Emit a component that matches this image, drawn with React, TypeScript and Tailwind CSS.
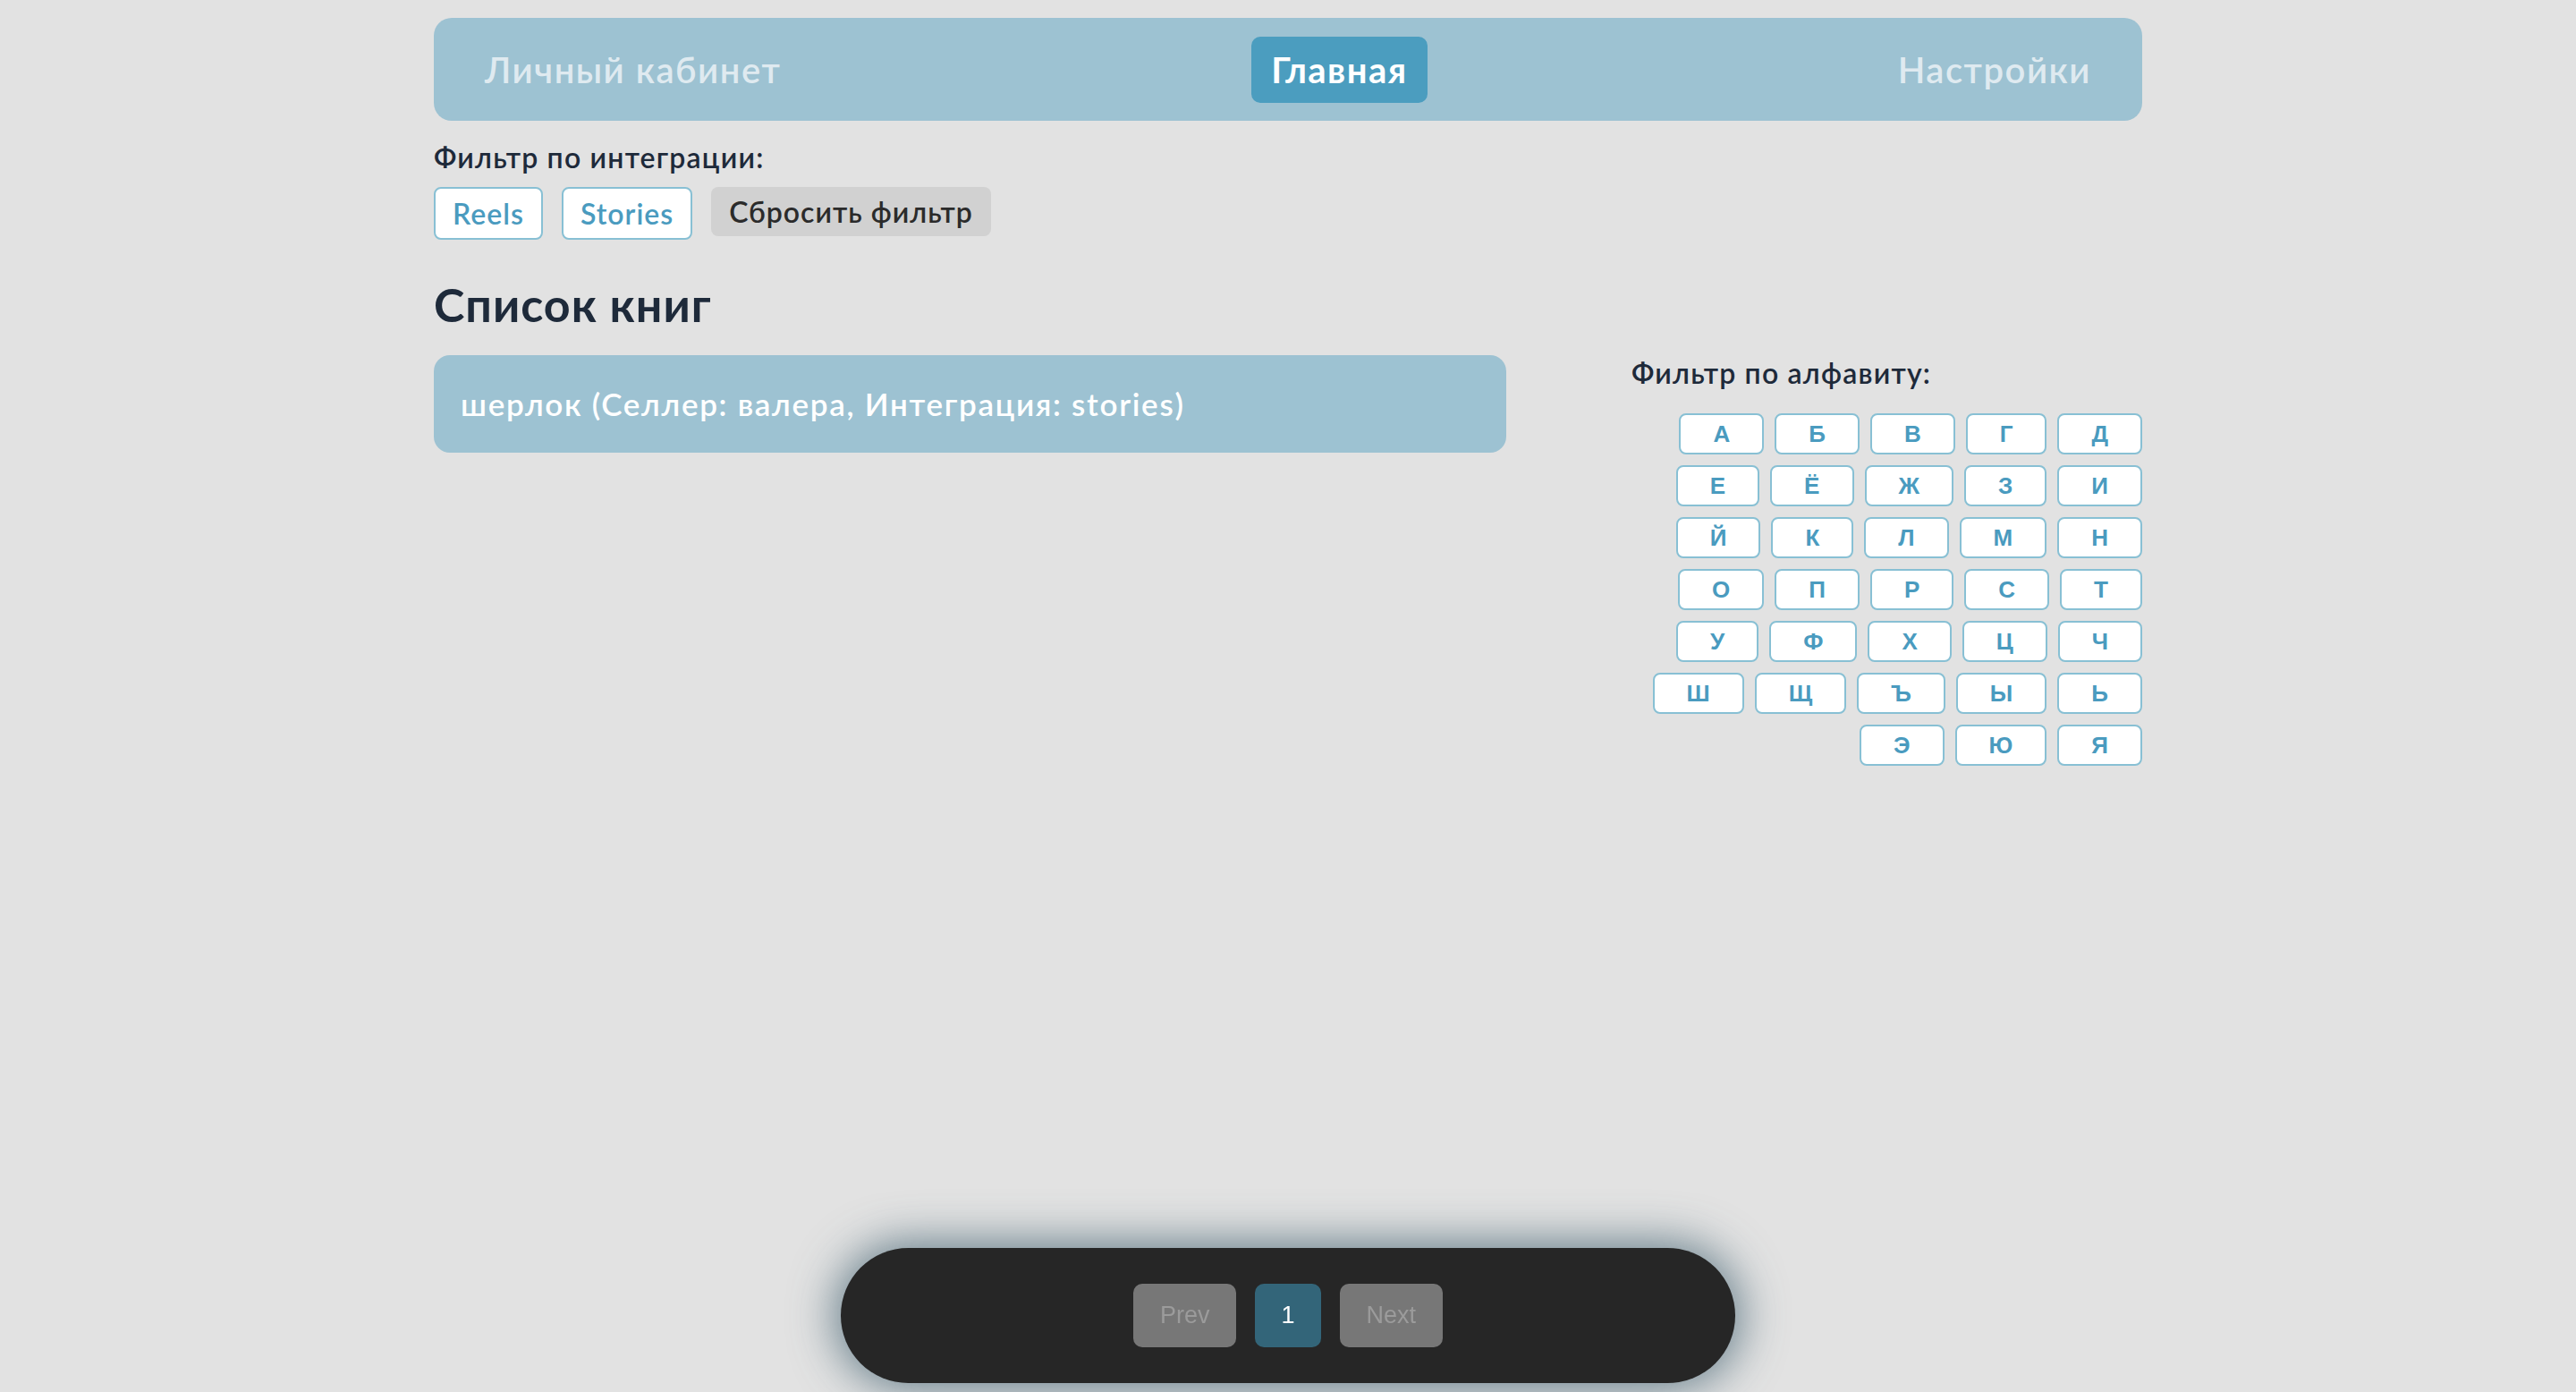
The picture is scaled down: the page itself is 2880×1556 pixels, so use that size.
import { useState } from 'react';

const letters = 'АБВГДЕЁЖЗИЙКЛМНОПРСТУФХЦЧШЩЪЫЬЭЮЯ'.split('');

const books = [{ title: 'шерлок', seller: 'валера', integration: 'stories' }];

const App = () => {
  const [page] = useState(1);

  return (
    <div className="min-h-screen bg-[#e2e2e2] font-['Lato','Noto_Sans',sans-serif]">
      <div className="w-[1910px] mx-auto pt-[20px] pb-[200px]">
        {/* top navigation */}
        <nav className="h-[115px] rounded-[20px] bg-[#9dc2d2] flex items-center justify-between px-[57px]">
          <a className="text-[40px] font-semibold tracking-[1.5px] text-[#dfeaf0]">Личный кабинет</a>
          <a className="h-[74px] px-[22px] rounded-[10px] bg-[#4b9dbf] flex items-center text-[40px] font-bold tracking-[1.5px] text-white">
            Главная
          </a>
          <a className="text-[40px] font-semibold tracking-[1.5px] text-[#dfeaf0]">Настройки</a>
        </nav>

        {/* integration filter */}
        <div className="mt-[21px]">
          <div className="text-[32px] font-semibold tracking-[1.2px] text-[#1e2a3a] leading-[40px]">Фильтр по интеграции:</div>
          <div className="mt-[13px] flex items-start gap-[21px]">
            <button className="h-[59px] px-[19px] rounded-[8px] border-2 border-[#88c0d4] bg-white text-[32px] font-semibold tracking-[1px] text-[#4a9bbf]">
              Reels
            </button>
            <button className="h-[59px] px-[19px] rounded-[8px] border-2 border-[#88c0d4] bg-white text-[32px] font-semibold tracking-[1px] text-[#4a9bbf]">
              Stories
            </button>
            <button className="h-[55px] px-[20px] rounded-[8px] bg-[#d1d1d1] text-[32px] font-semibold tracking-[1px] text-[#2b2b2b]">
              Сбросить фильтр
            </button>
          </div>
        </div>

        <h2 className="mt-[42px] text-[52px] font-bold tracking-[1px] text-[#1e2a3a] leading-[60px]">Список книг</h2>

        <div className="mt-[27px] flex items-start justify-between">
          {/* book list */}
          <div className="w-[1199px] flex flex-col gap-[20px]">
            {books.map((b) => (
              <div
                key={b.title}
                className="h-[109px] rounded-[18px] bg-[#9dc2d2] flex items-center px-[30px] text-[35px] font-semibold tracking-[1.7px] text-white"
              >
                {b.title} (Селлер: {b.seller}, Интеграция: {b.integration})
              </div>
            ))}
          </div>

          {/* alphabet filter */}
          <div className="w-[571px]">
            <div className="text-[32px] font-semibold tracking-[1.2px] text-[#1e2a3a] leading-[40px]">Фильтр по алфавиту:</div>
            <div className="mt-[25px] flex flex-wrap justify-end gap-[12px]">
              {letters.map((l) => (
                <button
                  key={l}
                  className="h-[46px] px-[36px] rounded-[8px] border-2 border-[#88c0d4] bg-white text-[26px] font-bold text-[#4a9bbf] font-['Liberation_Sans',Arial,sans-serif]"
                >
                  {l}
                </button>
              ))}
            </div>
          </div>
        </div>
      </div>

      {/* pagination */}
      <div className="fixed bottom-[10px] left-1/2 -translate-x-1/2 w-[1000px] h-[151px] rounded-full bg-[#262626] shadow-[0_0_50px_6px_rgba(60,92,108,0.75)] flex items-center justify-center gap-[21px] font-['Liberation_Sans',Arial,sans-serif]">
        <button className="h-[71px] px-[30px] rounded-[10px] bg-[#777777] text-[27px] text-[#9b9b9b]">Prev</button>
        <button className="h-[71px] px-[29px] rounded-[10px] bg-[#336579] text-[27px] text-white">{page}</button>
        <button className="h-[71px] px-[30px] rounded-[10px] bg-[#777777] text-[27px] text-[#9b9b9b]">Next</button>
      </div>
    </div>
  );
};

export default App;
